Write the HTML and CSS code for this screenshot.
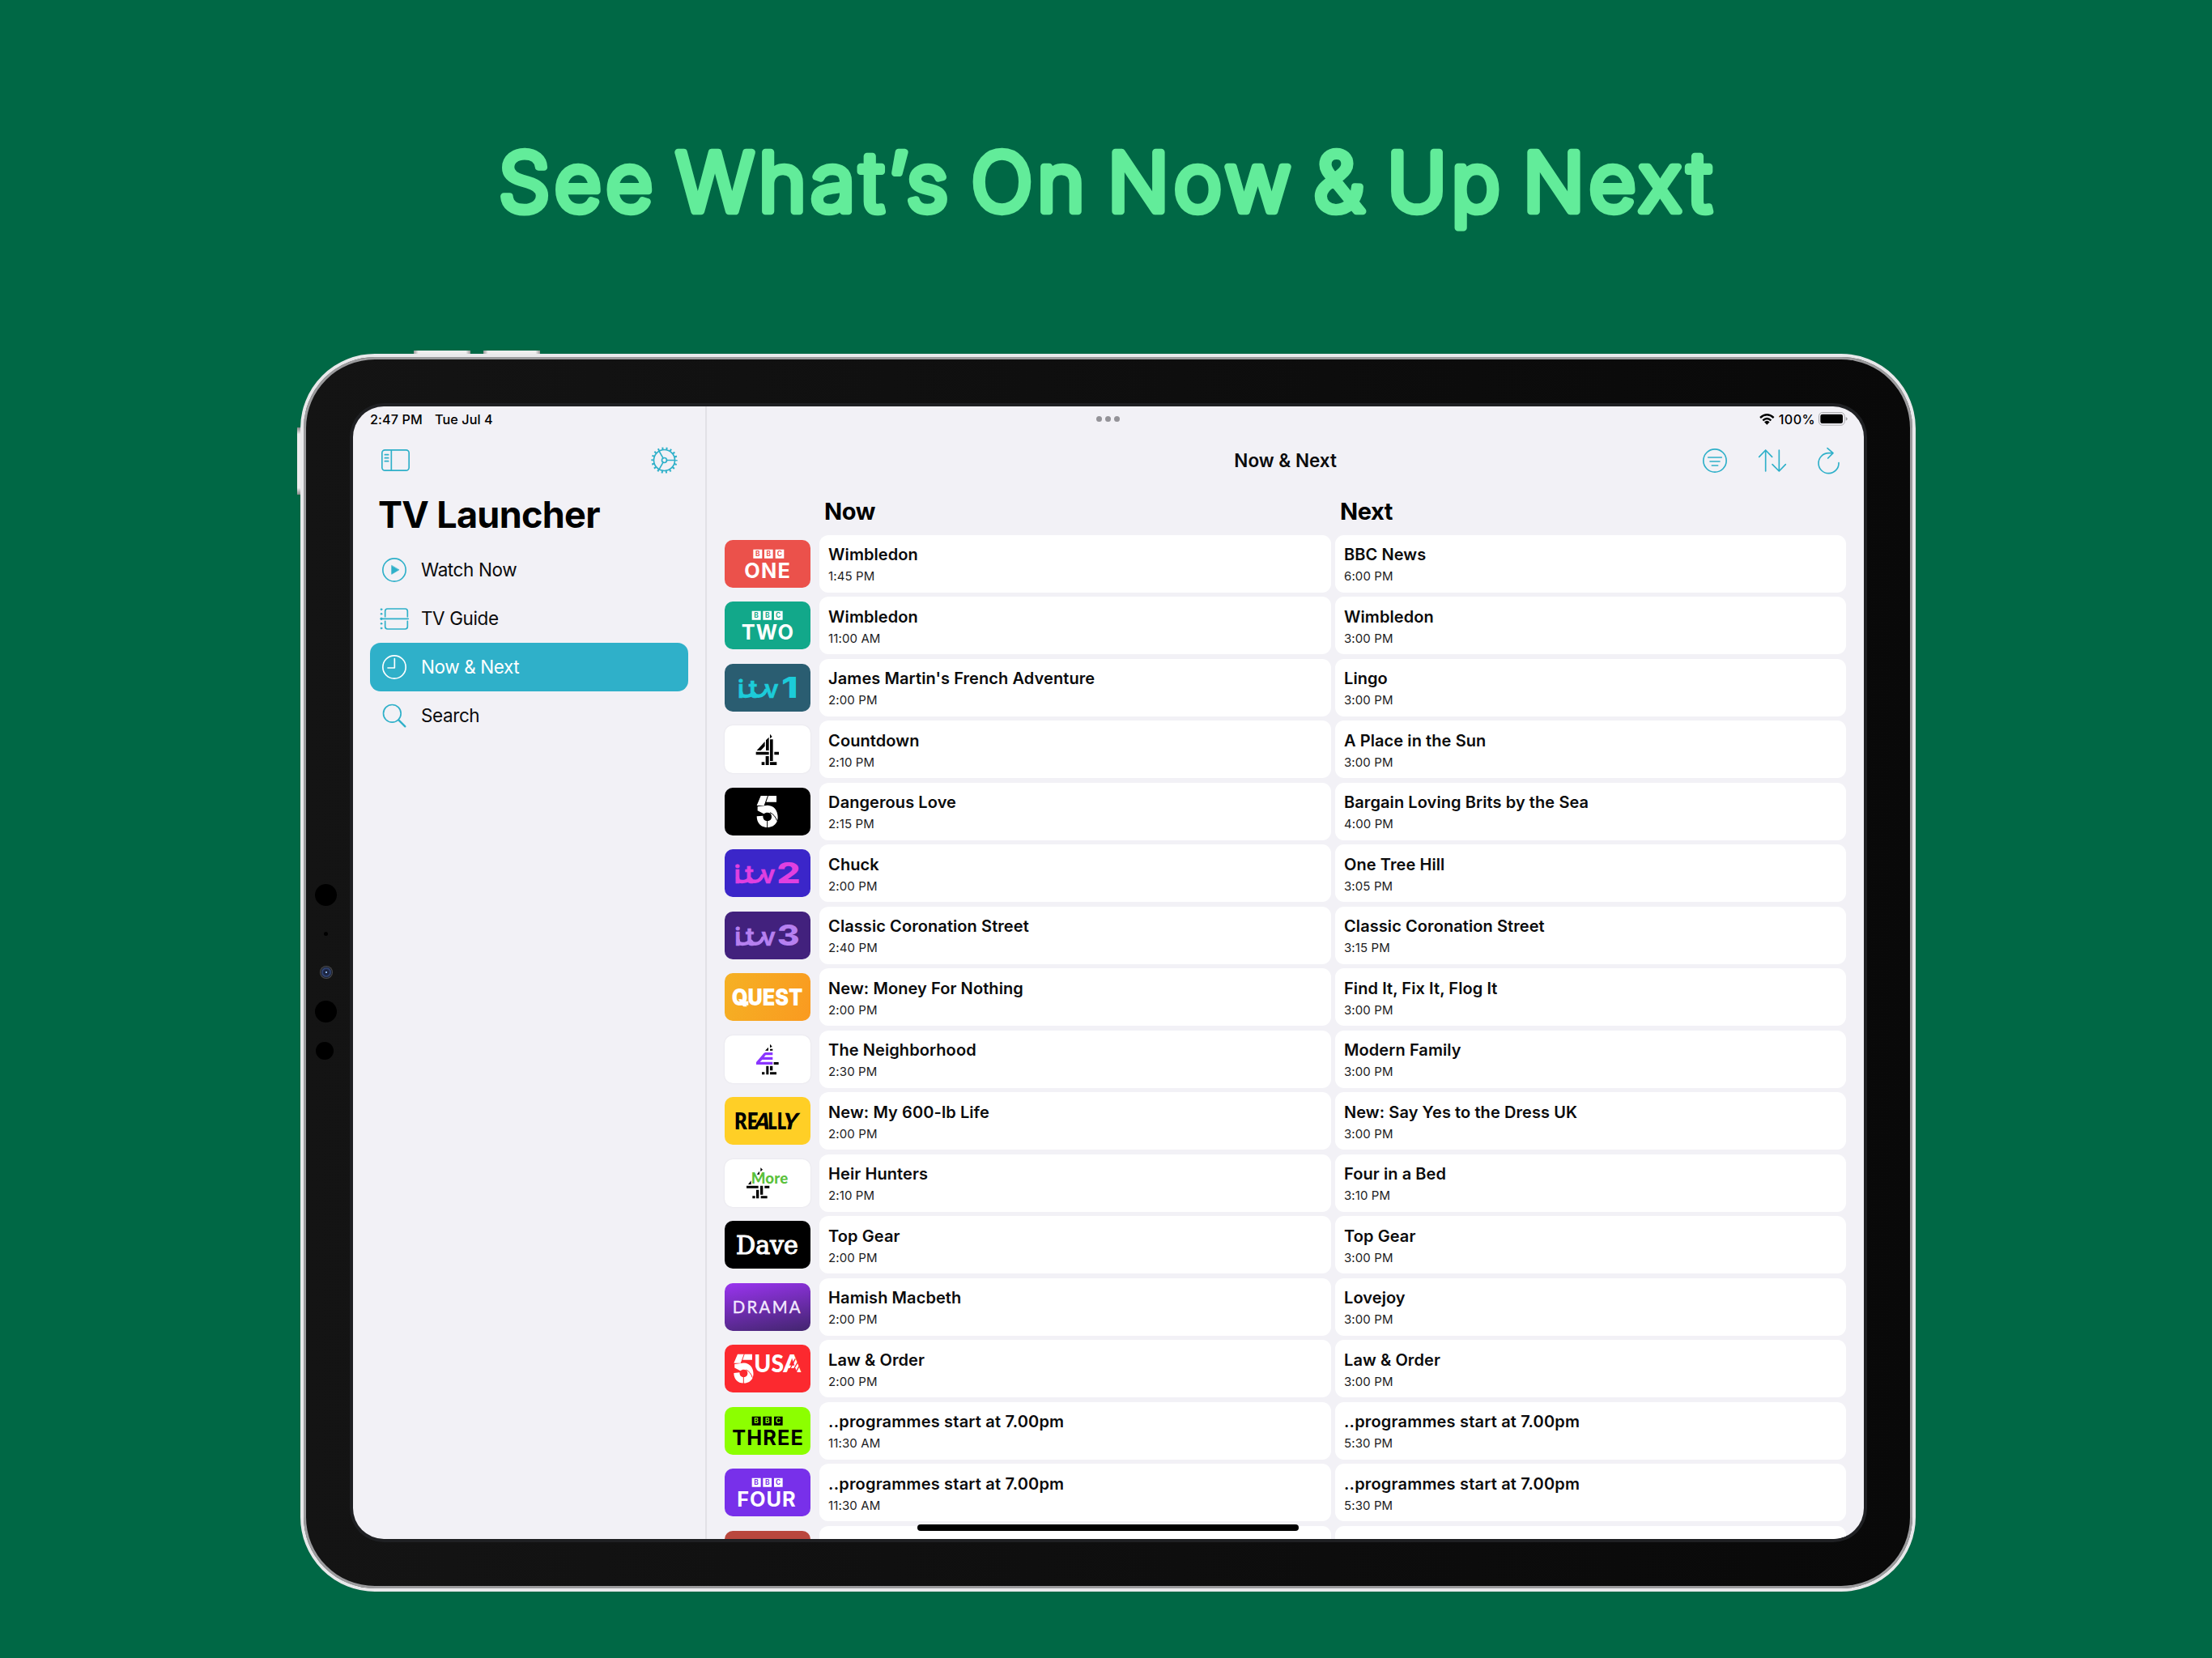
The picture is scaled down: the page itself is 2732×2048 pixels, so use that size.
FILE: index.html
```html
<!DOCTYPE html>
<html lang="en">
<head>
<meta charset="utf-8">
<title>TV Launcher</title>
<link rel="stylesheet" href="styles.css">
</head>
<body>
<svg class="defs" aria-hidden="true">
  <defs>
    <g id="five">
      <path d="M15 0H40L27 36H0ZM43 0H73V23H35Z"/>
      <path d="M3 40L40 35C64 36 78 54 78 79C78 103 61 117 39 117C15 117 0 100 0 76L23 74C23 88 30 93 39 93C49 93 55 87 55 77C55 67 49 62 40 62C34 62 29 64 26 67L3 55Z"/>
    </g>
    <g id="bbc-boxes"><path d="M0 0H33V33H0ZM41 0H73V33H41ZM82 0H114V33H82Z"/></g>
    <g id="itv" font-family="Inter" font-weight="600">
      <text x="-5 36 94" y="76" font-size="90" stroke-width="2">itv</text>
      <path d="M8 56Q8 70 24 70Q44 70 53 58M56 60Q62 71 76 69Q92 67 100 48" fill="none" stroke-width="13" stroke-linecap="round"/>
    </g>
  </defs>
</svg>
<main class="poster">
  <h1 class="headline">
    <svg viewBox="0 0 1520 140" role="img"><text x="10" y="99" textLength="1498">See What’s On Now &amp; Up Next</text></svg>
  </h1>
  <div class="device">
    <i class="button button-a"></i><i class="button button-b"></i><i class="button button-side"></i>
    <i class="sensor s1"></i><i class="sensor s2"></i><i class="sensor lens"></i><i class="sensor s4"></i><i class="sensor s5"></i>
    <div class="screen">
      <div class="status">
        <div class="status-left"><span>2:47 PM</span><span>Tue Jul 4</span></div>
        <div class="dots"><i></i><i></i><i></i></div>
        <div class="status-right">
          <svg class="wifi" viewBox="0 0 56 42"><g fill="none" stroke="#000" stroke-width="7"><path d="M3 15Q28 -7 53 15"/><path d="M13 25Q28 11 43 25"/></g><path d="M18 31Q28 22 38 31L28 41Z"/></svg>
          <span>100%</span>
          <svg class="battery" viewBox="0 0 108 50"><rect x="1.500" y="1.500" width="95" height="47" rx="13" fill="none" stroke="#a9a9ad" stroke-width="3"/><rect x="7" y="8" width="83" height="34" rx="7"/><path d="M101 18Q107 20 107 25Q107 30 101 32Z" fill="#a0a0a4"/></svg>
        </div>
      </div>
      <aside class="sidebar">
        <div class="sidebar-tools">
          <svg class="icon" style="width:35px;height:27px" viewBox="0 0 105 81"><rect x="2.500" y="2.500" width="100" height="76" rx="11"/><path d="M37 3V78M13 20H26M13 32H26M13 44H26"/></svg>
          <svg class="icon" style="width:33px;height:33px" viewBox="-49.500 -49.500 99 99"><circle r="39"/><circle r="9"/><circle r="44" stroke-width="9" stroke-linecap="butt" stroke-dasharray="6 9.358" stroke-dashoffset="3"/><path d="M9 0H39M-4.500 -8L-19.500 -34M-4.500 8L-19.500 34"/></svg>
        </div>
        <h2 class="app-title">TV Launcher</h2>
        <nav class="menu">
          <a class="item"><span class="glyph"><svg class="icon" style="width:30px;height:30px" viewBox="0 0 90 90"><circle cx="45" cy="45" r="42.500"/><path class="solid" d="M35 29V61L62 45Z"/></svg></span><span class="label">Watch Now</span></a>
          <a class="item"><span class="glyph"><svg class="icon" style="width:36px;height:27px" viewBox="0 0 108 81"><path d="M5 40H106M20 32V12Q20 3 29 3H94Q103 3 103 12V32M20 49V69Q20 78 29 78H94Q103 78 103 69V49"/><g class="solid"><circle cx="6" cy="5" r="3"/><circle cx="6" cy="22" r="3"/><circle cx="6" cy="40" r="4"/><circle cx="6" cy="58" r="3"/><circle cx="6" cy="75" r="3"/></g></svg></span><span class="label">TV Guide</span></a>
          <a class="item selected"><span class="glyph"><svg class="icon" style="width:30px;height:30px" viewBox="0 0 90 90"><circle cx="45" cy="45" r="42.500"/><path d="M46 14V48H21"/></svg></span><span class="label">Now &amp; Next</span></a>
          <a class="item"><span class="glyph"><svg class="icon" style="width:30px;height:30px" viewBox="0 0 90 90"><circle cx="37" cy="37" r="32.500"/><path stroke-width="7" d="M61 61L85 85"/></svg></span><span class="label">Search</span></a>
        </nav>
      </aside>
      <section class="content">
        <header class="toolbar">
          <span></span>
          <strong>Now &amp; Next</strong>
          <div class="actions">
            <svg class="icon" style="width:30px;height:30px" viewBox="0 0 90 90"><circle cx="45" cy="45" r="42.500"/><path d="M20 33H70M27 48H63M34 63H56"/></svg>
            <svg class="icon" style="width:34px;height:28px" viewBox="0 0 102 84"><path d="M26 81V3M2 28L26 3L50 28M76 3V81M51 56L76 81L100 56"/></svg>
            <svg class="icon" style="width:27px;height:32px" viewBox="0 0 81 96"><path d="M78 56A37.500 37.500 0 1 1 40 20H56M36 2L57 20L38 39"/></svg>
          </div>
        </header>
        <div class="guide">
          <span></span><h3>Now</h3><h3>Next</h3>

          <svg class="logo" style="background:#eb514b" viewBox="0 0 316 177" fill="#fff"><use href="#bbc-boxes" x="106" y="35"/><text class="bbc" fill="#eb514b" x="122 163 203.500" y="61">BBC</text><text class="chan" x="73" y="140" textLength="170">ONE</text></svg>
          <article class="card"><b>Wimbledon</b><time>1:45 PM</time></article><article class="card"><b>BBC News</b><time>6:00 PM</time></article>

          <svg class="logo" style="background:#12a88a" viewBox="0 0 316 177" fill="#fff"><use href="#bbc-boxes" x="101" y="35"/><text class="bbc" fill="#12a88a" x="117 158 198.500" y="61">BBC</text><text class="chan" x="62" y="140" textLength="193">TWO</text></svg>
          <article class="card"><b>Wimbledon</b><time>11:00 AM</time></article><article class="card"><b>Wimbledon</b><time>3:00 PM</time></article>

          <svg class="logo" style="background:#2a5d71" viewBox="0 0 316 177" fill="#1ccbd9" stroke="#1ccbd9"><use href="#itv" x="53" y="50"/><text class="num" x="210" y="126" textLength="62" lengthAdjust="spacingAndGlyphs">1</text></svg>
          <article class="card"><b>James Martin's French Adventure</b><time>2:00 PM</time></article><article class="card"><b>Lingo</b><time>3:00 PM</time></article>

          <svg class="logo pale" viewBox="0 0 316 177"><path d="M116 98H164V109H116ZM119 93L149 60V77L134 93ZM153 55L164 44V93H153ZM168 52H179V132H168ZM168 32L176 42L168 49ZM184 98H201V109H184ZM152 114H164V147H152ZM137 136H148V147H137ZM168 136H193V147H168Z"/></svg>
          <article class="card"><b>Countdown</b><time>2:10 PM</time></article><article class="card"><b>A Place in the Sun</b><time>3:00 PM</time></article>

          <svg class="logo" style="background:#000" viewBox="0 0 316 177" fill="#fff"><use href="#five" x="119" y="30"/><path d="M158 122V148M168 92Q186 100 194 122" fill="none" stroke="#000" stroke-width="3"/></svg>
          <article class="card"><b>Dangerous Love</b><time>2:15 PM</time></article><article class="card"><b>Bargain Loving Brits by the Sea</b><time>4:00 PM</time></article>

          <svg class="logo" style="background:#3b26c9" viewBox="0 0 316 177" fill="#e040e0" stroke="#e040e0"><use href="#itv" x="40" y="50"/><text class="num" x="193" y="126" textLength="88" lengthAdjust="spacingAndGlyphs">2</text></svg>
          <article class="card"><b>Chuck</b><time>2:00 PM</time></article><article class="card"><b>One Tree Hill</b><time>3:05 PM</time></article>

          <svg class="logo" style="background:#42217d" viewBox="0 0 316 177" fill="#b680f0" stroke="#b680f0"><use href="#itv" x="42" y="50"/><text class="num" x="194" y="126" textLength="84" lengthAdjust="spacingAndGlyphs">3</text></svg>
          <article class="card"><b>Classic Coronation Street</b><time>2:40 PM</time></article><article class="card"><b>Classic Coronation Street</b><time>3:15 PM</time></article>

          <svg class="logo quest" viewBox="0 0 316 177" fill="#fff"><text x="26" y="119" font-family="Inter" font-weight="900" font-size="84" textLength="263" lengthAdjust="spacingAndGlyphs">QUEST</text><path d="M62 104H88V119H62Z"/></svg>
          <article class="card"><b>New: Money For Nothing</b><time>2:00 PM</time></article><article class="card"><b>Find It, Fix It, Flog It</b><time>3:00 PM</time></article>

          <svg class="logo pale" viewBox="0 0 316 177"><path fill="#8a35ff" d="M151 63H178V73H152L146 80H178V90H139L131 98H178V108H117V99L146 65Z"/><path d="M168 32L176 41L168 46ZM150 56L162 44V56ZM168 50H178V56H168ZM182 99H200V108H182ZM154 113H163V145H154ZM168 113H178V130H168ZM138 136H148V145H138ZM168 136H192V145H168Z"/></svg>
          <article class="card"><b>The Neighborhood</b><time>2:30 PM</time></article><article class="card"><b>Modern Family</b><time>3:00 PM</time></article>

          <svg class="logo" style="background:#ffcf26" viewBox="0 0 316 177"><g font-family="Lato" font-weight="800" font-size="83"><text x="36" y="119" textLength="88" lengthAdjust="spacingAndGlyphs">RE</text><text transform="translate(106 119) skewX(-14)" textLength="56" lengthAdjust="spacingAndGlyphs">A</text><text x="160" y="119" textLength="68" lengthAdjust="spacingAndGlyphs">LL</text><text transform="translate(212 119) skewX(-12)" textLength="54" lengthAdjust="spacingAndGlyphs">Y</text></g></svg>
          <article class="card"><b>New: My 600-lb Life</b><time>2:00 PM</time></article><article class="card"><b>New: Say Yes to the Dress UK</b><time>3:00 PM</time></article>

          <svg class="logo pale" viewBox="0 0 316 177"><path d="M133 31L141 38L133 46ZM119 56L129 44V56ZM87 93L98 79V93ZM81 98H125V107H81ZM117 113H127V145H117ZM132 98H142V131H132ZM148 98H166V107H148ZM103 136H113V145H103ZM134 136H158V145H134Z"/><text x="98" y="91" fill="#5ac13c" stroke="#fff" stroke-width="5" paint-order="stroke" font-family="Lato" font-weight="900" font-size="56" textLength="137">More</text></svg>
          <article class="card"><b>Heir Hunters</b><time>2:10 PM</time></article><article class="card"><b>Four in a Bed</b><time>3:10 PM</time></article>

          <svg class="logo" style="background:#000" viewBox="0 0 316 177" fill="#fff"><text x="42" y="122" font-family="DejaVu Serif" font-size="93" stroke="#fff" stroke-width="3.500" textLength="231" lengthAdjust="spacingAndGlyphs">Dave</text></svg>
          <article class="card"><b>Top Gear</b><time>2:00 PM</time></article><article class="card"><b>Top Gear</b><time>3:00 PM</time></article>

          <svg class="logo drama" viewBox="0 0 316 177" fill="#f3e9ff"><text x="29" y="111" font-family="Lato" font-weight="400" font-size="61" stroke="#f3e9ff" stroke-width="1" textLength="252">DRAMA</text></svg>
          <article class="card"><b>Hamish Macbeth</b><time>2:00 PM</time></article><article class="card"><b>Lovejoy</b><time>3:00 PM</time></article>

          <svg class="logo" style="background:#fc292f" viewBox="0 0 316 177" fill="#fff"><use href="#five" transform="translate(34 35) scale(.93 .92)"/><path d="M70 120V145M79 93Q96 100 103 122" fill="none" stroke="#fc292f" stroke-width="3"/><text x="109" y="101" font-family="Lato" font-weight="900" font-size="93" textLength="110" lengthAdjust="spacingAndGlyphs">US</text><text x="217" y="101" font-family="Lato" font-weight="900" font-size="93" textLength="66" lengthAdjust="spacingAndGlyphs">A</text><path d="M236 102L262 52M250 102L270 66M264 102L276 80" stroke="#fc292f" stroke-width="4"/></svg>
          <article class="card"><b>Law &amp; Order</b><time>2:00 PM</time></article><article class="card"><b>Law &amp; Order</b><time>3:00 PM</time></article>

          <svg class="logo" style="background:#8cff00" viewBox="0 0 316 177"><use href="#bbc-boxes" x="101" y="35"/><text class="bbc" fill="#8cff00" x="117 158 198.500" y="61">BBC</text><text class="chan" x="28" y="140" textLength="263">THREE</text></svg>
          <article class="card off-air"><b>..programmes start at 7.00pm</b><time>11:30 AM</time></article><article class="card off-air"><b>..programmes start at 7.00pm</b><time>5:30 PM</time></article>

          <svg class="logo" style="background:#7830ea" viewBox="0 0 316 177" fill="#fff"><use href="#bbc-boxes" x="101" y="35"/><text class="bbc" fill="#7830ea" x="117 158 198.500" y="61">BBC</text><text class="chan" x="46" y="140" textLength="217">FOUR</text></svg>
          <article class="card off-air"><b>..programmes start at 7.00pm</b><time>11:30 AM</time></article><article class="card off-air"><b>..programmes start at 7.00pm</b><time>5:30 PM</time></article>

          <svg class="logo" style="background:#b9473d" viewBox="0 0 316 177"></svg>
          <article class="card"></article><article class="card"></article>
        </div>
      </section>
      <i class="home-bar"></i>
    </div>
  </div>
</main>
</body>
</html>
```

FILE: styles.css
```css
* { box-sizing: border-box; }
body { margin: 0; background: #006845; font-family: Inter, "Liberation Sans", sans-serif; color: #0b0b0c; }
i { display: block; }
.defs { position: absolute; width: 0; height: 0; }

.poster { width: 2732px; height: 2048px; overflow: hidden; display: flex; flex-direction: column; align-items: center; padding-top: 162px; }
.headline { margin: 0 0 135px; width: 1520px; height: 140px; }
.headline svg { display: block; width: 1520px; height: 140px; overflow: visible; }
.headline text { font-family: Inter, sans-serif; font-size: 100px; font-weight: 350; word-spacing: -11px; fill: #62ec9a; stroke: #62ec9a; stroke-width: 8.500px; stroke-linejoin: round; }

.device { position: relative; width: 1995px; height: 1529px; margin-left: 5px; padding: 61px 60px 61px 61px; border: 4px solid #e9e9eb; border-radius: 92px; background: linear-gradient(90deg, #141414, #090909); box-shadow: inset 0 0 0 3px #9b9b9d; }
.device::before { content: ""; position: absolute; left: 57px; top: 57px; width: 1874px; height: 1407px; border-radius: 42px; background: #1f2023; }
.button { position: absolute; background: linear-gradient(90deg, #999, #eee 8%, #eee 92%, #999); }
.button-a { left: 136px; top: -8px; width: 70px; height: 4px; }
.button-b { left: 222px; top: -8px; width: 70px; height: 4px; }
.button-side { left: -8px; top: 87px; width: 4px; height: 83px; background: linear-gradient(#888, #eee 10%, #eee 90%, #888); }
.sensor { position: absolute; border-radius: 50%; background: #000; }
.s1 { left: 14px; top: 651px; width: 27px; height: 27px; }
.s2 { left: 24.500px; top: 710px; width: 5px; height: 5px; }
.lens { left: 20px; top: 752px; width: 16px; height: 16px; background: radial-gradient(circle, #8ab4e8 0 8%, #1d2540 12% 30%, #34497e 45%, #20242e 58%, #4a4a4c 66%); }
.s4 { left: 14px; top: 795px; width: 27px; height: 27px; }
.s5 { left: 15px; top: 846px; width: 22px; height: 22px; }

.screen { position: relative; display: flex; width: 1866px; height: 1399px; overflow: hidden; border-radius: 38px; background: #f2f1f6; }

.status { position: absolute; inset: 0 0 auto 0; height: 31px; padding: 0 20px 0 21px; display: grid; grid-template-columns: 1fr auto 1fr; align-items: center; font-size: 16.200px; font-weight: 500; letter-spacing: .1px; color: #000; }
.status-left, .status-right, .dots { display: flex; align-items: center; }
.status-left { gap: 15px; }
.status-right { justify-content: flex-end; gap: 4px; }
.status-right span { letter-spacing: .400px; }
.dots { gap: 4px; margin-right: 3px; }
.dots i { width: 7px; height: 7px; border-radius: 50%; background: #949398; }
.wifi { width: 18.700px; height: 14px; margin-right: 1px; }
.battery { width: 36px; height: 16.700px; }

.sidebar { width: 438px; border-right: 2px solid #e2e1e6; padding: 0 21px; }
.sidebar-tools { margin-top: 31px; height: 71px; padding: 0 13px 0 14px; display: flex; align-items: center; justify-content: space-between; }
.icon { display: block; fill: none; stroke: #2fb0c9; stroke-width: 5; stroke-linecap: round; stroke-linejoin: round; overflow: visible; }
.icon .solid { fill: #2fb0c9; stroke-width: 2; }
.app-title { margin: 0; height: 70px; padding-left: 10px; line-height: 64px; font-size: 45px; font-weight: 700; letter-spacing: -.700px; color: #000; }
.menu { display: flex; flex-direction: column; }
.item { display: flex; align-items: center; height: 60px; border-radius: 13px; font-size: 22.500px; letter-spacing: -.400px; }
.label { padding-bottom: 1px; }
.glyph { display: grid; place-items: center; width: 60px; margin-right: 3px; }
.selected { background: #2fb0c9; color: #fff; }
.selected .icon { stroke: #fff; }

.content { flex: 1; padding: 31px 22px 0; }
.toolbar { height: 71px; display: grid; grid-template-columns: 1fr auto 1fr; align-items: center; font-size: 22.500px; }
.toolbar strong { font-weight: 600; }
.actions { display: flex; align-items: center; justify-content: flex-end; gap: 39px; padding-right: 8px; }
.guide { display: grid; grid-template-columns: 111.300px 631.400px 631px; column-gap: 5.500px; grid-template-rows: 51.400px; grid-auto-rows: 71px; row-gap: 5.500px; }
.guide h3 { margin: 0; padding-left: 6px; line-height: 55px; font-size: 29px; font-weight: 700; letter-spacing: -.400px; color: #000; }
.logo { align-self: center; width: 105.300px; height: 59px; border-radius: 10px; }
.pale { background: #fff; box-shadow: 0 0 2px #dddce2; }
.quest { background: linear-gradient(110deg, #f5b124, #fa9a20); }
.drama { background: linear-gradient(170deg, #9a34f0, #42256e); }
.bbc { font: 700 25px Inter, sans-serif; text-anchor: middle; }
.chan { font: 700 76px Inter, sans-serif; }
.num { font: 800 106px Inter, sans-serif; stroke: none; }
.card { padding: 12.600px 11px 0; border-radius: 11px; background: #fff; display: flex; flex-direction: column; gap: 5.600px; }
.card b { font-size: 20px; line-height: 24px; font-weight: 600; letter-spacing: .080px; }
.off-air b { letter-spacing: .190px; }
.card time { font-size: 15px; line-height: 18px; letter-spacing: .100px; color: #1c1c1e; }
.home-bar { position: absolute; left: 697px; top: 1381px; width: 471px; height: 8px; border-radius: 4px; background: #000; }
```
